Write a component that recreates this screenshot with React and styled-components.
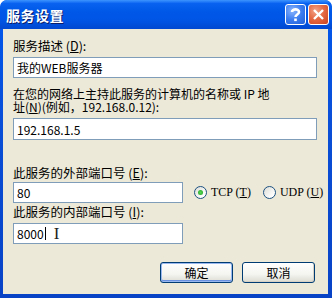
import styled, { createGlobalStyle } from "styled-components";

const GlobalStyle = createGlobalStyle`
  html, body { margin: 0; padding: 0; background: #fff; }
  body { font-family: "Noto Sans CJK SC", "Liberation Sans", sans-serif; }
`;

const Window = styled.div`
  width: 332px;
  height: 298px;
  box-sizing: border-box;
  display: flex;
  flex-direction: column;
  background: linear-gradient(180deg, #0058ee 0%, #0a4fd8 40%, #0843c6 100%);
  border-radius: 7px 7px 0 0;
  padding: 0 4px 4px 3px;
  overflow: hidden;
`;

const TitleBar = styled.div`
  height: 29px;
  flex: none;
  display: flex;
  align-items: center;
  padding: 0 3px 0 6px;
  background: linear-gradient(180deg, #3d95ff 0%, #0a62f0 12%, #0058e8 40%, #0055e5 70%, #0048d0 100%);
  margin: 0 -4px 0 -3px;
  border-radius: 7px 7px 0 0;
`;

const Title = styled.div`
  flex: 1;
  color: #fff;
  font-size: 14px;
  font-weight: 700;
  letter-spacing: 0.5px;
  text-shadow: 1px 1px 0 #0a1e6a;
`;

const CapButton = styled.div`
  width: 21px;
  height: 21px;
  box-sizing: border-box;
  border: 1px solid #fff;
  border-radius: 3px;
  margin-left: 2px;
  display: flex;
  align-items: center;
  justify-content: center;
  background: ${({ close }) =>
    close
      ? "radial-gradient(circle at 35% 30%, #f2a489 0%, #e56a45 45%, #c9431f 100%)"
      : "radial-gradient(circle at 35% 30%, #8cb6fc 0%, #3b7cf0 50%, #2160d8 100%)"};
`;

const Body = styled.div`
  flex: 1;
  background: #ece9d8;
  padding: 10px 11px 0 10px;
  display: flex;
  flex-direction: column;
`;

const Label = styled.div`
  font-size: ${({ fs }) => fs || 12.5}px;
  line-height: ${({ lh }) => lh || 14}px;
  height: ${({ lh }) => lh || 14}px;
  color: #000;
  margin-top: ${({ mt }) => mt || 0}px;
  white-space: nowrap;
`;

const Key = styled.span`
  text-decoration: underline;
`;

const Input = styled.div`
  width: ${({ w }) => (w ? `${w}px` : "100%")};
  height: ${({ h }) => h || 21}px;
  box-sizing: border-box;
  flex: none;
  border: 1px solid #7f9db9;
  background: #fff;
  margin-top: ${({ mt }) => mt || 0}px;
  padding: 0 3px;
  display: flex;
  align-items: center;
  font-size: 12px;
  color: #000;
  white-space: nowrap;
`;

const Row = styled.div`
  display: flex;
  align-items: center;
  margin-top: ${({ mt }) => mt || 0}px;
`;

const Radios = styled.div`
  display: flex;
  align-items: center;
  gap: 12px;
  margin-left: 11px;
`;

const Radio = styled.label`
  display: flex;
  align-items: center;
  gap: 4px;
  font-size: 12px;
  white-space: nowrap;
  font-family: "Liberation Serif", "Noto Sans CJK SC", serif;
`;

const Dot = styled.span`
  width: 13px;
  height: 13px;
  flex: none;
  box-sizing: border-box;
  border: 1px solid #1c5180;
  border-radius: 50%;
  background: linear-gradient(135deg, #dcdcd6 0%, #fff 80%);
  display: flex;
  align-items: center;
  justify-content: center;
  &::after {
    content: "";
    width: 5px;
    height: 5px;
    border-radius: 50%;
    background: ${({ on }) => (on ? "radial-gradient(circle, #55d655 0%, #21a121 100%)" : "transparent")};
  }
`;

const Caret = styled.span`
  display: inline-block;
  width: 1px;
  height: 13px;
  background: #000;
  margin-left: 1px;
`;

const IBeam = styled.span`
  margin-left: 8px;
  font-family: "Liberation Serif", serif;
  font-size: 17px;
  line-height: 1;
  color: #222;
`;

const Buttons = styled.div`
  display: flex;
  justify-content: flex-end;
  gap: 9px;
  margin-top: 18px;
  padding-right: 2px;
`;

const Button = styled.div`
  width: 73px;
  height: 21px;
  box-sizing: border-box;
  border: 1px solid #003c74;
  border-radius: 3px;
  background: linear-gradient(180deg, #ffffff 0%, #f4f4f0 60%, #dcdcd2 100%);
  display: flex;
  align-items: center;
  justify-content: center;
  font-size: 12px;
  color: #000;
  box-shadow: ${({ def }) =>
    def ? "inset 0 0 0 1px #9ab8f0, inset 0 -1px 0 1px #6a90e0" : "inset -1px -1px 0 #d6d0c5"};
`;

export default function App() {
  return (
    <>
      <GlobalStyle />
      <Window>
        <TitleBar>
          <Title>服务设置</Title>
          <CapButton>
            <svg width="13" height="15" viewBox="0 0 13 15">
              <path d="M3 5 C3 1.5 10 1.5 10 5 C10 7.5 6.5 7.5 6.5 10" fill="none" stroke="#fff" strokeWidth="2.6" />
              <rect x="5.2" y="11.5" width="2.6" height="2.6" fill="#fff" />
            </svg>
          </CapButton>
          <CapButton close>
            <svg width="13" height="13" viewBox="0 0 13 13">
              <path d="M2 2 L11 11 M11 2 L2 11" stroke="#fff" strokeWidth="2.4" />
            </svg>
          </CapButton>
        </TitleBar>
        <Body>
          <Label>服务描述 (<Key>D</Key>):</Label>
          <Input mt={4} h={21}>我的WEB服务器</Input>
          <Label mt={9} lh={13} fs={12}>在您的网络上主持此服务的计算机的名称或 IP 地</Label>
          <Label lh={13} fs={12}>址(<Key>N</Key>)(例如，192.168.0.12):</Label>
          <Input mt={5} h={22}>192.168.1.5</Input>
          <Label mt={26}>此服务的外部端口号 (<Key>E</Key>):</Label>
          <Row mt={2}>
            <Input w={170} h={21}>80</Input>
            <Radios>
              <Radio>
                <Dot on />
                <span>TCP (<Key>T</Key>)</span>
              </Radio>
              <Radio>
                <Dot />
                <span>UDP (<Key>U</Key>)</span>
              </Radio>
            </Radios>
          </Row>
          <Label mt={2}>此服务的内部端口号 (<Key>I</Key>):</Label>
          <Input mt={4} w={170} h={21}>
            8000<Caret />
            <IBeam>I</IBeam>
          </Input>
          <Buttons>
            <Button def>确定</Button>
            <Button>取消</Button>
          </Buttons>
        </Body>
      </Window>
    </>
  );
}
